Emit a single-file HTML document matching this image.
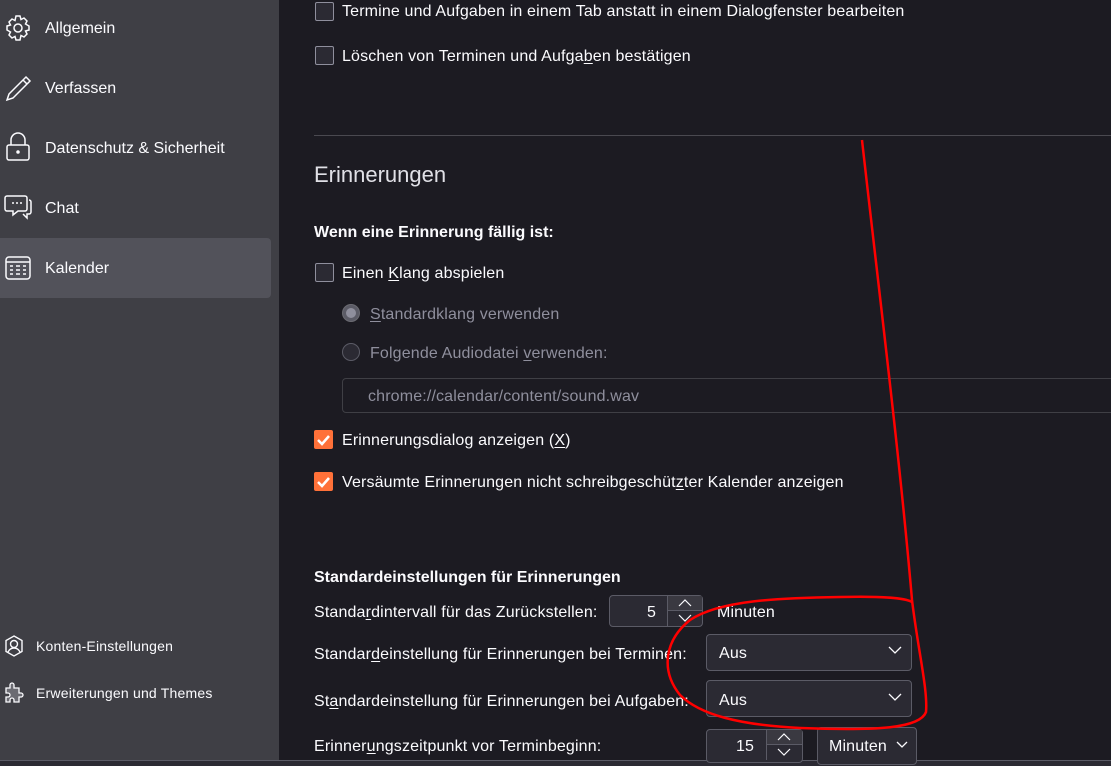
<!DOCTYPE html>
<html><head><meta charset="utf-8"><style>
body{margin:0;width:1111px;height:765px;overflow:hidden;background:#1c1b22;font-family:"Liberation Sans",sans-serif;color:#fbfbfe;position:relative}
.a{position:absolute;white-space:nowrap}
#side{position:absolute;left:0;top:0;width:279px;height:760px;background:#3f3f45}
.nav{font-size:16px;left:45px}
.sel{position:absolute;left:0;top:238px;width:271px;height:60px;background:#52525a;border-radius:0 4px 4px 0}
.cb{position:absolute;width:17px;height:17px;border:1px solid #8f8f9d;background:#2b2a33;border-radius:2px}
.cbo{position:absolute;width:19px;height:19px;background:#ff7139;border-radius:2px}
.t{font-size:16px;letter-spacing:0.15px}
.g{color:#8f8f9d}
.b{font-weight:bold;font-size:16px}
.box{position:absolute;border:1px solid #5b5b66;border-radius:4px;background:#2b2a33}
u{text-decoration:underline;text-underline-offset:2px}
.sp{position:absolute;border-left:1px solid #5b5b66}
</style></head><body>
<div id="side"></div>
<div class="sel"></div>
<svg class="a" style="left:4px;top:14px" width="28" height="28" viewBox="0 0 28 28" fill="none" stroke="#fbfbfe" stroke-width="1.5"><circle cx="14" cy="14" r="4"/><path d="M12 2h4l1 3.5 3-1.5 3 3-1.5 3L25 12v4l-3.5 1 1.5 3-3 3-3-1.5L16 26h-4l-1-3.5-3 1.5-3-3 1.5-3L3 16v-4l3.5-1L5 8l3-3 3 1.5z"/></svg>
<div class="a nav" style="top:20px">Allgemein</div>
<svg class="a" style="left:4px;top:75px" width="28" height="28" viewBox="0 0 28 28" fill="none" stroke="#fbfbfe" stroke-width="1.5"><path d="M22 2l4 4L9 23l-6 2 2-6z M19 5l4 4"/></svg>
<div class="a nav" style="top:80px">Verfassen</div>
<svg class="a" style="left:5px;top:132px" width="26" height="30" viewBox="0 0 26 30" fill="none" stroke="#fbfbfe" stroke-width="1.5"><path d="M6 13V8a7 7 0 0 1 14 0v5"/><rect x="2" y="13" width="22" height="15" rx="2"/><circle cx="13" cy="20" r="1" fill="#fbfbfe"/></svg>
<div class="a nav" style="top:140px">Datenschutz &amp; Sicherheit</div>
<svg class="a" style="left:4px;top:194px" width="28" height="28" viewBox="0 0 28 28" fill="none" stroke="#fbfbfe" stroke-width="1.5"><path d="M3 2h18a2 2 0 0 1 2 2v11a2 2 0 0 1-2 2H14l-5 4v-4H3a2 2 0 0 1-2-2V4a2 2 0 0 1 2-2z M25 6a2 2 0 0 1 2 2v10a2 2 0 0 1-2 2h-2v4l-4-4"/><path d="M8 9h2M12 9h2M16 9h2"/></svg>
<div class="a nav" style="top:200px">Chat</div>
<svg class="a" style="left:5px;top:255px" width="26" height="26" viewBox="0 0 26 26" fill="none" stroke="#fbfbfe" stroke-width="1.5"><rect x="1" y="2" width="24" height="22" rx="3"/><path d="M1 7h24M5 11h3M11 11h4M18 11h3M5 15h3M11 15h4M18 15h3M5 19h3M11 19h4M18 19h3"/></svg>
<div class="a nav" style="top:260px">Kalender</div>
<svg class="a" style="left:4px;top:635px" width="20" height="22" viewBox="0 0 20 22" fill="none" stroke="#fbfbfe" stroke-width="1.4"><path d="M10 1l8 4.5v11L10 21 2 16.5v-11z"/><circle cx="10" cy="9" r="3.5"/><path d="M4 17c1.5-3 3.5-4 6-4s4.5 1 6 4"/></svg>
<div class="a" style="left:36px;top:638px;font-size:14px;letter-spacing:0.2px">Konten-Einstellungen</div>
<svg class="a" style="left:3px;top:682px" width="22" height="22" viewBox="0 0 22 22" fill="#6b6b72" stroke="#fbfbfe" stroke-width="1.3"><path d="M3 6h4V3a2 2 0 0 1 4 0v3h5v5h2a2 2 0 0 1 0 4h-2v5h-5v-2a2 2 0 0 0-4 0v2H3v-5h2a2 2 0 0 0 0-4H3z"/></svg>
<div class="a" style="left:36px;top:685px;font-size:14px;letter-spacing:0.2px">Erweiterungen und Themes</div>
<div class="a" style="left:0;top:760px;width:1111px;height:5px;background:#2b2a33;border-top:1px solid #5b5b66"></div>

<div class="cb" style="left:315px;top:2px"></div>
<div class="a t" style="left:342px;top:3px">Termine und Aufgaben in einem Tab anstatt in einem Dialogfenster bearbeiten</div>
<div class="cb" style="left:315px;top:46px"></div>
<div class="a t" style="left:342px;top:48px">Löschen von Terminen und Aufga<u>b</u>en bestätigen</div>
<div class="a" style="left:314px;top:135px;width:797px;height:1px;background:#4a4950"></div>
<div class="a" style="left:314px;top:162px;font-size:22px;font-weight:300;color:#e0e0e6">Erinnerungen</div>
<div class="a b" style="left:314px;top:224px">Wenn eine Erinnerung fällig ist:</div>
<div class="cb" style="left:315px;top:263px"></div>
<div class="a t" style="left:342px;top:265px">Einen <u>K</u>lang abspielen</div>
<div class="a" style="left:342px;top:304px;width:18px;height:18px;border-radius:50%;background:#5b5b66;border:1px solid #6b6b72;box-sizing:border-box"><div style="margin:3px;width:10px;height:10px;border-radius:50%;background:#8f8f9d"></div></div>
<div class="a t g" style="left:370px;top:306px"><u>S</u>tandardklang verwenden</div>
<div class="a" style="left:342px;top:343px;width:18px;height:18px;border-radius:50%;border:1px solid #5b5b66;background:#2b2a33;box-sizing:border-box"></div>
<div class="a t g" style="left:370px;top:345px">Folgende Audiodatei <u>v</u>erwenden:</div>
<div class="box" style="left:342px;top:378px;width:780px;height:33px;background:#1c1b22;border-color:#3f3f45"></div>
<div class="a t g" style="left:368px;top:388px">chrome://calendar/content/sound.wav</div>
<div class="cbo" style="left:314px;top:430px"><svg width="19" height="19"><path d="M4 10l4 4 7-8" stroke="#fff" stroke-width="2.5" fill="none"/></svg></div>
<div class="a t" style="left:342px;top:432px">Erinnerungsdialog anzeigen (<u>X</u>)</div>
<div class="cbo" style="left:314px;top:472px"><svg width="19" height="19"><path d="M4 10l4 4 7-8" stroke="#fff" stroke-width="2.5" fill="none"/></svg></div>
<div class="a t" style="left:342px;top:474px">Versäumte Erinnerungen nicht schreibgeschüt<u>z</u>ter Kalender anzeigen</div>

<div class="a b" style="left:314px;top:569px">Standardeinstellungen für Erinnerungen</div>
<div class="a t" style="left:314px;top:604px">Standa<u>r</u>dintervall für das Zurückstellen:</div>
<div class="box" style="left:609px;top:595px;width:92px;height:30px"></div>
<div class="a t" style="left:647px;top:604px">5</div>
<div class="sp" style="left:667px;top:596px;width:34px;height:30px"><div style="height:14px;border-bottom:1px solid #5b5b66;background:#3a3941"><svg width="34" height="14"><path d="M11 10l6-6 6 6" stroke="#fbfbfe" stroke-width="1.2" fill="none"/></svg></div><svg width="34" height="14"><path d="M11 4l6 6 6-6" stroke="#fbfbfe" stroke-width="1.2" fill="none"/></svg></div>
<div class="a t" style="left:717px;top:604px">Minuten</div>
<div class="a t" style="left:314px;top:646px">Standar<u>d</u>einstellung für Erinnerungen bei Terminen:</div>
<div class="box" style="left:706px;top:634px;width:204px;height:35px"></div>
<div class="a t" style="left:719px;top:645px">Aus</div>
<svg class="a" style="left:888px;top:645px" width="14" height="10"><path d="M1 2l6 6 6-6" stroke="#fbfbfe" stroke-width="1.3" fill="none"/></svg>
<div class="a t" style="left:314px;top:693px">St<u>a</u>ndardeinstellung für Erinnerungen bei Aufgaben:</div>
<div class="box" style="left:706px;top:680px;width:204px;height:35px"></div>
<div class="a t" style="left:719px;top:692px">Aus</div>
<svg class="a" style="left:888px;top:692px" width="14" height="10"><path d="M1 2l6 6 6-6" stroke="#fbfbfe" stroke-width="1.3" fill="none"/></svg>
<div class="a t" style="left:314px;top:738px">Erinner<u>u</u>ngszeitpunkt vor Terminbeginn:</div>
<div class="box" style="left:706px;top:729px;width:95px;height:32px"></div>
<div class="a t" style="left:736px;top:738px">15</div>
<div class="sp" style="left:766px;top:730px;width:35px;height:30px"><div style="height:14px;border-bottom:1px solid #5b5b66;background:#3a3941"><svg width="35" height="14"><path d="M11 10l6-6 6 6" stroke="#fbfbfe" stroke-width="1.2" fill="none"/></svg></div><svg width="35" height="14"><path d="M11 4l6 6 6-6" stroke="#fbfbfe" stroke-width="1.2" fill="none"/></svg></div>
<div class="box" style="left:817px;top:727px;width:98px;height:36px"></div>
<div class="a t" style="left:829px;top:738px">Minuten</div>
<svg class="a" style="left:896px;top:740px" width="12" height="9"><path d="M1 2l5 5 5-5" stroke="#fbfbfe" stroke-width="1.3" fill="none"/></svg>

<svg class="a" style="left:0;top:0" width="1111" height="765" fill="none" stroke="#f00" stroke-width="2.5">
<path d="M862 140 C880 300 900 460 912 600 C918 650 928 690 926 712 C920 728 880 731 800 728 C740 725 700 715 680 695 C660 670 665 640 690 620 C720 600 780 598 840 597 C880 596 905 598 912 602"/>
</svg>
</body></html>
